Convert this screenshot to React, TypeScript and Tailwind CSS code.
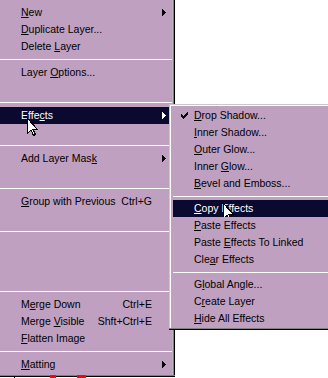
import React from "react";

const HL = "bg-[#0a0a30] text-white";

function Arrow() {
  return (
    <svg width="4" height="7" viewBox="0 0 4 7" shapeRendering="crispEdges" className="ml-[10px]">
      <rect x="0" y="0" width="1" height="7" fill="currentColor" />
      <rect x="1" y="1" width="1" height="5" fill="currentColor" />
      <rect x="2" y="2" width="1" height="3" fill="currentColor" />
      <rect x="3" y="3" width="1" height="1" fill="currentColor" />
    </svg>
  );
}

function Check() {
  return (
    <svg width="7" height="7" viewBox="0 0 7 7" shapeRendering="crispEdges" className="absolute left-[8px] top-[5px]">
      <rect x="6" y="0" width="1" height="1" fill="currentColor" />
      <rect x="5" y="1" width="2" height="1" fill="currentColor" />
      <rect x="0" y="2" width="1" height="1" fill="currentColor" />
      <rect x="4" y="2" width="3" height="1" fill="currentColor" />
      <rect x="0" y="3" width="2" height="1" fill="currentColor" />
      <rect x="3" y="3" width="3" height="1" fill="currentColor" />
      <rect x="0" y="4" width="5" height="1" fill="currentColor" />
      <rect x="1" y="5" width="3" height="1" fill="currentColor" />
      <rect x="2" y="6" width="1" height="1" fill="currentColor" />
    </svg>
  );
}

function Row({
  children,
  shortcut,
  arrow,
  active,
  check,
}: {
  children: React.ReactNode;
  shortcut?: string;
  arrow?: boolean;
  active?: boolean;
  check?: boolean;
}) {
  return (
    <div className={`relative flex h-[17px] items-center leading-[17px] ${active ? HL : "text-black"}`}>
      {check && <Check />}
      <div className="flex-1 whitespace-nowrap pl-[21px]">{children}</div>
      {shortcut && <div className="whitespace-nowrap">{shortcut}</div>}
      <div className="flex w-[20px] items-center">{arrow && <Arrow />}</div>
    </div>
  );
}

function Sep({ h = 9 }: { h?: number }) {
  return (
    <div className={`flex flex-col justify-center ${h === 9 ? "h-[9px]" : "h-[8px]"}`}>
      <div className="h-px bg-white" />
    </div>
  );
}

function Cursor({ className }: { className: string }) {
  return (
    <svg width="12" height="19" viewBox="0 0 12 19" className={className}>
      <path
        d="M0.5 0.5 L0.5 15.5 L4 12 L6.5 17.5 L8.5 16.5 L6 11.5 L10.5 11.5 Z"
        fill="white"
        stroke="black"
        strokeWidth="1"
        shapeRendering="crispEdges"
      />
    </svg>
  );
}

export default function App() {
  return (
    <div
      className="relative h-[378px] w-[328px] overflow-hidden bg-white text-[10.5px]"
      style={{ fontFamily: '"Liberation Sans", Arial, sans-serif' }}
    >
      {/* Main menu */}
      <div className="flex w-[175px]">
        <div className="w-[172px] bg-[#bfa0c0] pb-px pt-[4px]">
          <Row arrow>
            <u>N</u>ew
          </Row>
          <Row>
            <u>D</u>uplicate Layer...
          </Row>
          <Row>
            Delete <u>L</u>ayer
          </Row>
          <Sep />
          <Row>
            Layer <u>O</u>ptions...
          </Row>
          <div className="h-[17px]" />
          <Sep />
          <Row arrow active>
            Effe<u>c</u>ts
          </Row>
          <div className="h-[17px]" />
          <Sep />
          <Row arrow>
            Add Layer Mas<u>k</u>
          </Row>
          <div className="h-[17px]" />
          <Sep />
          <Row shortcut="Ctrl+G">
            <u>G</u>roup with Previous
          </Row>
          <div className="h-[17px]" />
          <Sep />
          <div className="h-[51px]" />
          <Sep />
          <Row shortcut="Ctrl+E">
            M<u>e</u>rge Down
          </Row>
          <Row shortcut="Shft+Ctrl+E">
            Merge <u>V</u>isible
          </Row>
          <Row>
            <u>F</u>latten Image
          </Row>
          <Sep />
          <Row arrow>
            <u>M</u>atting
          </Row>
          <div className="h-px" />
        </div>
        <div className="w-px bg-[#b8b8b8]" />
        <div className="w-px bg-[#808080]" />
        <div className="w-px bg-black" />
      </div>
      <div className="h-px w-[175px] bg-[#808080]" />
      <div className="h-px w-[175px] bg-black" />

      {/* bottom background bits */}
      <div className="absolute left-[14px] top-[376px] h-[2px] w-px bg-black" />
      <div className="absolute left-[50px] top-[375px] h-[3px] w-[6px] bg-[#e01010]" />
      <div className="absolute left-[77px] top-[375px] h-[3px] w-[9px] bg-[#e01010]" />

      {/* Effects submenu */}
      <div className="absolute left-[169px] top-[104px] flex w-[200px] flex-col">
        <div className="flex">
          <div className="w-px bg-[#c8c8c8]" />
          <div className="flex-1">
            <div className="h-px bg-[#c8c8c8]" />
            <div className="flex">
              <div className="w-px bg-white" />
              <div className="flex-1">
                <div className="h-px bg-white" />
                <div className="bg-[#bfa0c0] pb-px pl-[2px] pt-px">
                  <Row check>
                    <u>D</u>rop Shadow...
                  </Row>
                  <Row>
                    <u>I</u>nner Shadow...
                  </Row>
                  <Row>
                    <u>O</u>uter Glow...
                  </Row>
                  <Row>
                    Inner <u>G</u>low...
                  </Row>
                  <Row>
                    <u>B</u>evel and Emboss...
                  </Row>
                  <Sep h={8} />
                  <Row active>
                    <u>C</u>opy Effects
                  </Row>
                  <Row>
                    <u>P</u>aste Effects
                  </Row>
                  <Row>
                    Paste <u>E</u>ffects To Linked
                  </Row>
                  <Row>
                    Cle<u>a</u>r Effects
                  </Row>
                  <Sep h={8} />
                  <Row>
                    G<u>l</u>obal Angle...
                  </Row>
                  <Row>
                    C<u>r</u>eate Layer
                  </Row>
                  <Row>
                    <u>H</u>ide All Effects
                  </Row>
                </div>
              </div>
            </div>
          </div>
        </div>
        <div className="h-px bg-[#808080]" />
        <div className="h-px bg-black" />
      </div>

      {/* cursors */}
      <Cursor className="absolute left-[27px] top-[118px]" />
      <div className="absolute left-[223px] top-[203px] h-[14px] w-[12px] overflow-hidden">
        <Cursor className="" />
      </div>
    </div>
  );
}
